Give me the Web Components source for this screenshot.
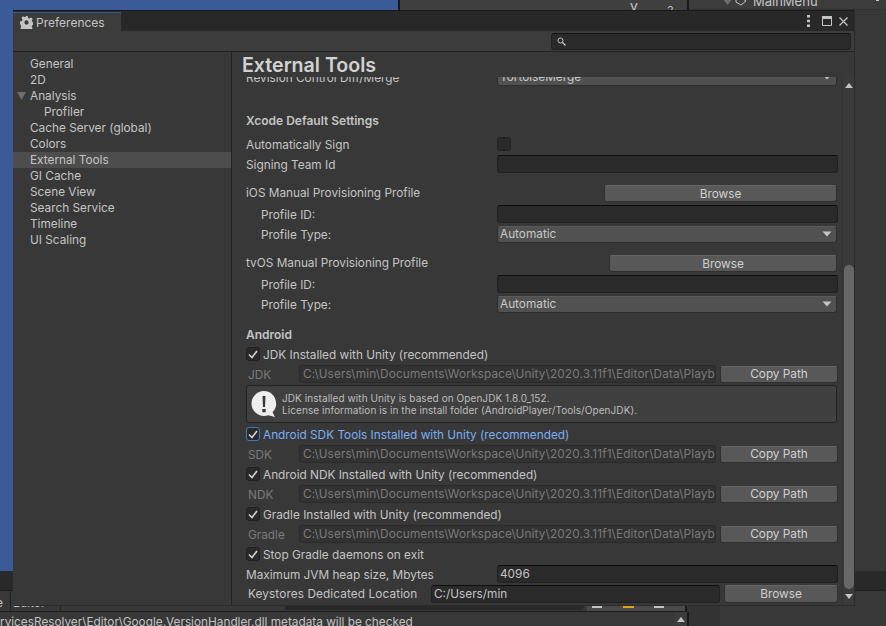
<!DOCTYPE html>
<html>
<head>
<meta charset="utf-8">
<style>
html, body { margin: 0; height: 100%; overflow: hidden; background: #383838; }
body { font: 11.8px Inter, "Liberation Sans", sans-serif; color: #c4c4c4; }
</style>
</head>
<body>
<editor-backdrop></editor-backdrop>
<pref-window>
  <pref-sidebar slot="side"></pref-sidebar>

  <pref-row style="margin-top:-10px"><span slot="label">Revision Control Diff/Merge</span><pref-select>TortoiseMerge</pref-select></pref-row>

  <pref-row bold style="margin-top:23px"><span slot="label">Xcode Default Settings</span></pref-row>
  <pref-row style="margin-top:4px"><span slot="label">Automatically Sign</span><pref-check></pref-check></pref-row>
  <pref-row><span slot="label">Signing Team Id</span><pref-field></pref-field></pref-row>

  <pref-row style="margin-top:8px" col="358"><span slot="label">iOS Manual Provisioning Profile</span><pref-button style="margin:3px 1px 0 0">Browse</pref-button></pref-row>
  <pref-row sub style="margin-top:2px"><span slot="label">Profile ID:</span><pref-field></pref-field></pref-row>
  <pref-row sub><span slot="label">Profile Type:</span><pref-select>Automatic</pref-select></pref-row>

  <pref-row style="margin-top:8px" col="363"><span slot="label">tvOS Manual Provisioning Profile</span><pref-button style="margin:3px 1px 0 0">Browse</pref-button></pref-row>
  <pref-row sub style="margin-top:2px"><span slot="label">Profile ID:</span><pref-field></pref-field></pref-row>
  <pref-row sub><span slot="label">Profile Type:</span><pref-select>Automatic</pref-select></pref-row>

  <pref-row bold style="margin-top:10px"><span slot="label">Android</span></pref-row>
  <pref-toggle>JDK Installed with Unity (recommended)</pref-toggle>
  <pref-path label="JDK">C:\Users\min\Documents\Workspace\Unity\2020.3.11f1\Editor\Data\Playb</pref-path>
  <pref-help><span>JDK installed with Unity is based on OpenJDK 1.8.0_152.</span><span>License information is in the install folder (AndroidPlayer/Tools/OpenJDK).</span></pref-help>
  <pref-toggle focused>Android SDK Tools Installed with Unity (recommended)</pref-toggle>
  <pref-path label="SDK">C:\Users\min\Documents\Workspace\Unity\2020.3.11f1\Editor\Data\Playb</pref-path>
  <pref-toggle>Android NDK Installed with Unity (recommended)</pref-toggle>
  <pref-path label="NDK">C:\Users\min\Documents\Workspace\Unity\2020.3.11f1\Editor\Data\Playb</pref-path>
  <pref-toggle>Gradle Installed with Unity (recommended)</pref-toggle>
  <pref-path label="Gradle">C:\Users\min\Documents\Workspace\Unity\2020.3.11f1\Editor\Data\Playb</pref-path>
  <pref-toggle>Stop Gradle daemons on exit</pref-toggle>
  <pref-row><span slot="label">Maximum JVM heap size, Mbytes</span><pref-field>4096</pref-field></pref-row>
  <pref-keystore></pref-keystore>
</pref-window>

<script>
const CARET = `<svg width="10" height="6" viewBox="0 0 10 6"><path d="M0.5 0.5h9L5 5.5z" fill="#c4c4c4"/></svg>`;

class EditorBackdrop extends HTMLElement {
    constructor() {
        super();
        this.attachShadow({ mode: "open" });
        this.shadowRoot.innerHTML = `
        <style>
            :host { position: absolute; inset: 0; display: grid; grid-template-rows: 10px 561px 20px 21px 1fr; overflow: hidden; color: #c4c4c4; }
            .top { display: grid; grid-template-columns: 398px 2px 287px 2px 1fr; }
            .blue { background: #3a5a98; }
            .sep { background: #191919; }
            .mid { background: #3f3f3f; display: flex; font-size: 14px; line-height: 11px; padding-left: 230px; gap: 29px; overflow: hidden; }
            .mid small { font-size: 11px; line-height: 20px; }
            .hier { background: #3c3c3c; border-bottom: 1px solid #303030; height: 9px; display: flex; align-items: center; white-space: nowrap; overflow: hidden; padding-left: 34px; gap: 3px; font-size: 13px; position: relative; }
            .hier b { font-weight: 400; margin: -8px 0 0 3px; }
            .hier svg { flex: none; margin-top: -6px; }
            .kebab { position: absolute; left: 187px; top: 0; }
            .body { display: grid; grid-template-columns: 13px 1fr; background: #383838; }
            .dark { background: #292929; border-bottom: 1px solid #1c1c1c; box-sizing: border-box; }
            .tabs { display: grid; grid-template-columns: 285px 299px 3px 98px 2px 33px 1fr; background: #383838; }
            .tabl { border-bottom: 1px solid #1c1c1c; display: flex; white-space: nowrap; line-height: 24px; overflow: hidden; }
            .tabl span { border-right: 1px solid #232323; padding-right: 7px; margin-right: 2px; }
            .tabl span:first-child { margin-left: -4px; }
            .tabl span + span { padding-right: 15px; }
            .find { background: #282828; border-radius: 0 0 4px 0; height: 19px; }
            .gap { border-bottom: 1px solid #1c1c1c; }
            .btns { background: #4a4a4a; border-bottom: 1px solid #1c1c1c; display: flex; align-items: flex-start; padding: 14px 0 0 5px; }
            .btns i { width: 12px; height: 3px; background: #c4c4c4; margin-right: 21px; }
            .btns i.warn { width: 13px; background: #d9a514; margin-right: 20px; }
            .side { background: #333; }
            .console { display: grid; grid-template-columns: 674px 13px 2px 31px 1fr; }
            .log { white-space: nowrap; overflow: hidden; padding-top: 3px; line-height: 14px; }
            .bar { background: #3c3c3c; display: flex; justify-content: center; padding-top: 5px; }
        </style>
        <div class="top">
            <div class="blue"></div><div class="sep"></div>
            <div class="mid"><span>y</span><small>2</small></div>
            <div class="sep"></div>
            <div class="hier">
                <svg width="9" height="6" viewBox="0 0 9 6"><path fill="#6e6e6e" d="M0 0h9L4.500 6z"/></svg>
                <svg width="12" height="8" viewBox="0 0 12 8"><path fill="none" stroke="#c4c4c4" d="M1 1l5 -1 5 3-5 4-5-3z"/></svg>
                <b>MainMenu</b>
                <svg class="kebab" width="3" height="9" viewBox="0 0 3 9"><path fill="#c4c4c4" d="M0 0h3v2H0zM0 5h3v2H0z"/></svg>
            </div>
        </div>
        <div class="body"><div class="blue"></div><div></div></div>
        <div class="dark"></div>
        <div class="tabs">
            <div class="tabl"><span>e</span><span>Editor</span></div>
            <div class="gap"><div class="find"></div></div>
            <div class="gap"></div>
            <div class="btns"><i></i><i class="warn"></i><i></i></div>
            <div class="sep"></div>
            <div class="side"></div>
            <div></div>
        </div>
        <div class="console">
            <div class="log">rvicesResolver\\Editor\\Google.VersionHandler.dll metadata will be checked</div>
            <div class="bar"><svg width="8" height="5" viewBox="0 0 8 5"><path fill="#c4c4c4" d="M4 0l4 5H0z"/></svg></div>
            <div class="sep"></div>
            <div class="side"></div>
            <div></div>
        </div>`;
    }
}
customElements.define("editor-backdrop", EditorBackdrop);

class PrefWindow extends HTMLElement {
    constructor() {
        super();
        this.attachShadow({ mode: "open" });
        this.shadowRoot.innerHTML = `
        <style>
            /* floating window on the editor, place is the content */
            :host { position: absolute; left: 13px; top: 10px; width: 841px; height: 595px; display: flex; flex-direction: column; background: #383838; box-shadow: 1px 1px 0 #2c2c2c; color: #c4c4c4; }
            .strip { height: 21px; box-sizing: border-box; flex: none; background: #282828; border-top: 1px solid #191919; display: flex; justify-content: space-between; }
            .tab { width: 108px; margin-top: 1px; background: #3c3c3c; border-top: 1px solid #2f5f9a; display: flex; align-items: center; gap: 3px; padding-left: 7px; box-sizing: border-box; font-size: 12px; }
            .wicons { display: flex; align-items: center; padding-right: 6px; }
            .wicons svg:nth-child(1) { margin-right: 12px; }
            .wicons svg:nth-child(2) { margin-right: 7px; }
            .bar { height: 21px; flex: none; box-sizing: border-box; background: #3c3c3c; border-bottom: 1px solid #232323; display: flex; justify-content: flex-end; align-items: center; padding-right: 3px; }
            .search { width: 300px; height: 17px; box-sizing: border-box; background: #2a2a2a; border: 1px solid #212121; border-top-color: #141414; border-radius: 3px; display: flex; align-items: center; padding-left: 5px; }
            .main { flex: 1; display: flex; min-height: 0; }
            .side { width: 218px; border-right: 1px solid #232323; flex: none; }
            .pane { flex: 1; display: flex; flex-direction: column; min-width: 0; }
            h1 { margin: 0; height: 25px; padding-left: 10px; font-size: 19.6px; font-weight: 600; line-height: 27px; color: #d2d2d2; flex: none; overflow: hidden; }
            .scroller { flex: 1; display: flex; min-height: 0; }
            .content { flex: 1; overflow: hidden; padding: 0 4px 0 14px; min-width: 0; }
            .sb { width: 12px; flex: none; display: flex; flex-direction: column; align-items: center; background: #3a3a3a; border-left: 1px solid #323232; box-sizing: border-box; }
            .thumb { width: 10px; height: 324px; background: #676767; border-radius: 5px; flex: none; }
            .up { margin-top: 6px; flex: none; }
            .down { margin-top: 5px; flex: none; }
        </style>
        <div class="strip">
            <div class="tab">
                <svg width="13" height="13" viewBox="0 0 24 24"><path fill="#c4c4c4" fill-rule="evenodd" d="M10 0h4l1 3.600 2.300 1 3.300-1.800 2.800 2.800-1.800 3.300 1 2.300 3.400 1v4l-3.400 1-1 2.300 1.800 3.300-2.800 2.800-3.300-1.800-2.300 1-1 3.400h-4l-1-3.400-2.300-1-3.300 1.800-2.800-2.800 1.800-3.300-1-2.300L0 14v-4l3.600-1 1-2.300-1.800-3.300 2.800-2.800 3.300 1.800 2.100-1zM12 8a4 4 0 1 0 0 8 4 4 0 0 0 0-8z"/></svg>
                <span>Preferences</span>
            </div>
            <div class="wicons">
                <svg width="3" height="12" viewBox="0 0 3 12"><path fill="#c4c4c4" d="M0 0h3v2.500H0zM0 4.750h3v2.500H0zM0 9.500h3V12H0z"/></svg>
                <svg width="10" height="10" viewBox="0 0 10 10"><path fill="none" stroke="#c4c4c4" d="M.5 1.500h9v8h-9z"/><path fill="#c4c4c4" d="M0 0h10v3H0z"/></svg>
                <svg width="9" height="9" viewBox="0 0 9 9"><path fill="none" stroke="#c4c4c4" stroke-width="1.200" d="M.5.5l8 8M8.500.5l-8 8"/></svg>
            </div>
        </div>
        <div class="bar">
            <div class="search">
                <svg width="9" height="9" viewBox="0 0 9 9"><circle cx="3.500" cy="3.500" r="2.500" fill="none" stroke="#c4c4c4"/><path stroke="#c4c4c4" stroke-width="1.400" d="M5.500 5.500L8.500 8.500"/></svg>
            </div>
        </div>
        <div class="main">
            <div class="side"><slot name="side"></slot></div>
            <div class="pane">
                <h1>External Tools</h1>
                <div class="scroller">
                    <div class="content"><slot></slot></div>
                    <div class="sb">
                        <svg class="up" width="8" height="5" viewBox="0 0 8 5"><path fill="#c4c4c4" d="M4 0l4 5H0z"/></svg>
                        <div style="height:177px;flex:none"></div>
                        <div class="thumb"></div>
                        <svg class="down" width="8" height="5" viewBox="0 0 8 5"><path fill="#c4c4c4" d="M0 0h8L4 5z"/></svg>
                    </div>
                </div>
            </div>
        </div>`;
    }
}
customElements.define("pref-window", PrefWindow);

class PrefSidebar extends HTMLElement {
    constructor() {
        super();
        this.attachShadow({ mode: "open" });
        const items = [["General"], ["2D"], ["Analysis", "open"], ["Profiler", "sub"], ["Cache Server (global)"], ["Colors"],
            ["External Tools", "sel"], ["GI Cache"], ["Scene View"], ["Search Service"], ["Timeline"], ["UI Scaling"]];
        const rows = items.map(([text, kind]) => `<div class="item ${kind || ""}">${kind === "open" ? `<svg viewBox="0 0 9 8" width="9" height="8"><path d="M0 0h9L4.500 8z" fill="#6e6e6e"/></svg>` : ""}${text}</div>`).join("");
        this.shadowRoot.innerHTML = `
        <style>
            :host { display: block; padding-top: 4px; }
            .item { height: 16px; line-height: 16px; padding-left: 17px; position: relative; white-space: nowrap; }
            .sub { padding-left: 31px; }
            .sel { background: #4d4d4d; }
            svg { position: absolute; left: 4px; top: 4px; }
        </style>${rows}`;
    }
}
customElements.define("pref-sidebar", PrefSidebar);

class PrefRow extends HTMLElement {
    constructor() {
        super();
        this.attachShadow({ mode: "open" });
        const bold = this.hasAttribute("bold");
        const sub = this.hasAttribute("sub");
        const col = this.getAttribute("col") || 251;
        this.shadowRoot.innerHTML = `
        <style>
            :host { display: grid; grid-template-columns: ${col}px 1fr; height: 20px; align-items: center; white-space: nowrap; }
            .label { padding: ${bold ? 0 : 2}px 0 0 ${sub ? 15 : 0}px; font-weight: ${bold ? 600 : 400}; font-size: ${bold ? 12 : 11.8}px; }
            .value { min-width: 0; }
        </style>
        <div class="label"><slot name="label"></slot></div>
        <div class="value"><slot></slot></div>`;
    }
}
customElements.define("pref-row", PrefRow);

class PrefField extends HTMLElement {
    constructor() {
        super();
        this.attachShadow({ mode: "open" });
        this.shadowRoot.innerHTML = `
        <style>
            :host { display: flex; align-items: center; height: 18px; box-sizing: border-box; background: #2a2a2a; border: 1px solid #212121; border-top-color: #0d0d0d; border-radius: 3px; padding-left: 2px; color: #c4c4c4; overflow: hidden; white-space: nowrap; }
        </style><slot></slot>`;
    }
}
customElements.define("pref-field", PrefField);

class PrefSelect extends HTMLElement {
    constructor() {
        super();
        this.attachShadow({ mode: "open" });
        this.shadowRoot.innerHTML = `
        <style>
            :host { display: flex; align-items: center; justify-content: space-between; height: 17px; margin-right: 1px; box-sizing: border-box; background: #515151; border: 1px solid #2e2e2e; border-top-color: #5a5a5a; border-radius: 3px; padding: 0 4px 0 2px; color: #c8c8c8; }
        </style><slot></slot>${CARET}`;
    }
}
customElements.define("pref-select", PrefSelect);

class PrefButton extends HTMLElement {
    constructor() {
        super();
        this.attachShadow({ mode: "open" });
        this.shadowRoot.innerHTML = `
        <style>
            :host { display: flex; align-items: center; justify-content: center; height: 17px; box-sizing: border-box; background: #585858; border: 1px solid #303030; border-top-color: #656565; border-radius: 3px; color: #d0d0d0; }
        </style><slot></slot>`;
    }
}
customElements.define("pref-button", PrefButton);

class PrefCheck extends HTMLElement {
    constructor() {
        super();
        this.attachShadow({ mode: "open" });
        const on = this.hasAttribute("checked");
        const focused = this.hasAttribute("focused");
        this.shadowRoot.innerHTML = `
        <style>
            :host { display: flex; flex: none; align-items: center; justify-content: center; width: 14px; height: 14px; box-sizing: border-box; background: #2a2a2a; border: 1px solid ${focused ? "#3a79bb" : "#212121"}; border-radius: 3px; }
        </style>${on ? `<svg width="10" height="9" viewBox="0 0 10 9"><path d="M1 4.500l3 3L9 1" fill="none" stroke="#d4d4d4" stroke-width="1.600"/></svg>` : ""}`;
    }
}
customElements.define("pref-check", PrefCheck);

class PrefToggle extends HTMLElement {
    constructor() {
        super();
        this.attachShadow({ mode: "open" });
        const focused = this.hasAttribute("focused");
        this.shadowRoot.innerHTML = `
        <style>
            :host { display: flex; align-items: center; gap: 3px; height: 20px; white-space: nowrap; color: ${focused ? "#7baef5" : "#c4c4c4"}; }
            .text { padding-top: 2px; }
        </style>
        <pref-check checked ${focused ? "focused" : ""}></pref-check><div class="text"><slot></slot></div>`;
    }
}
customElements.define("pref-toggle", PrefToggle);

class PrefPath extends HTMLElement {
    constructor() {
        super();
        this.attachShadow({ mode: "open" });
        this.shadowRoot.innerHTML = `
        <style>
            :host { display: grid; grid-template-columns: 53px 1fr 118px; height: 20px; align-items: center; color: #7a7a7a; white-space: nowrap; }
            .lab { padding: 1px 0 0 2px; }
            .path { height: 18px; margin-right: 4px; box-sizing: border-box; background: #323232; border: 1px solid #2a2a2a; border-radius: 3px; padding-left: 3px; overflow: hidden; line-height: 17px; min-width: 0; letter-spacing: 0.13px; }
        </style>
        <div class="lab"></div>
        <div class="path"><slot></slot></div>
        <pref-button>Copy Path</pref-button>`;
        this.shadowRoot.querySelector(".lab").textContent = this.getAttribute("label");
    }
}
customElements.define("pref-path", PrefPath);

class PrefHelp extends HTMLElement {
    constructor() {
        super();
        this.attachShadow({ mode: "open" });
        this.shadowRoot.innerHTML = `
        <style>
            :host { display: flex; align-items: center; gap: 5px; height: 38px; margin: 1px 1px 1px 0; box-sizing: border-box; background: #404040; border: 1px solid #232323; border-radius: 3px; padding-left: 4px; font-size: 10px; color: #bdbdbd; white-space: nowrap; }
            .text { line-height: 12px; letter-spacing: 0.07px; }
            ::slotted(span) { display: block; }
        </style>
        <svg width="26" height="28" viewBox="0 0 26 28"><path fill="#eeeeee" d="M13 1a12.500 12.500 0 1 0 0 25c1.500 0 3-.3 4.400-.8L24 27l-2.500-4.800A12.500 12.500 0 0 0 13 1z"/><path fill="#383838" d="M11.500 6h3l-.5 11h-2zM11.300 19h3.400v3.200h-3.400z"/></svg>
        <div class="text"><slot></slot></div>`;
    }
}
customElements.define("pref-help", PrefHelp);

class PrefKeystore extends HTMLElement {
    constructor() {
        super();
        this.attachShadow({ mode: "open" });
        this.shadowRoot.innerHTML = `
        <style>
            :host { display: grid; grid-template-columns: 179px 1fr 114px; column-gap: 4px; height: 20px; align-items: center; white-space: nowrap; padding-left: 2px; letter-spacing: 0.1px; }
            pref-button { height: 18px; letter-spacing: 0; }
            pref-field { letter-spacing: 0; }
        </style>
        <div>Keystores Dedicated Location</div>
        <pref-field>C:/Users/min</pref-field>
        <pref-button>Browse</pref-button>`;
    }
}
customElements.define("pref-keystore", PrefKeystore);
</script>
</body>
</html>
